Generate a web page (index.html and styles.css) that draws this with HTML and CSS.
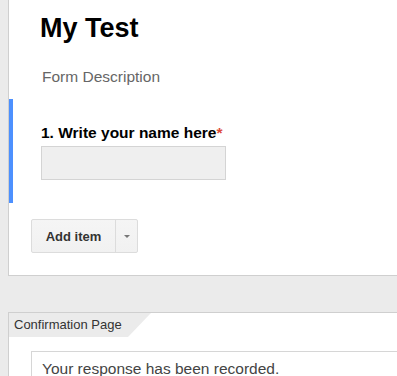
FILE: index.html
```html
<!DOCTYPE html>
<html lang="en">
<head>
  <meta charset="UTF-8">
  <title>My Test - Form Editor</title>
  <link rel="stylesheet" href="styles.css">
</head>
<body>
  <div class="form-card">
    <div class="form-header">
      <h1 class="form-title">My Test</h1>
      <div class="form-description">Form Description</div>
    </div>

    <div class="question active">
      <div class="question-title">1. Write your name here<span class="required">*</span></div>
      <input type="text" class="question-input">
    </div>

    <div class="add-row">
      <div class="split-button">
        <button class="split-main">Add item</button>
        <button class="split-arrow"><span class="caret"></span></button>
      </div>
    </div>
  </div>

  <div class="confirm-card">
    <div class="confirm-tab">Confirmation Page</div>
    <div class="confirm-message">Your response has been recorded.</div>
  </div>
</body>
</html>
```

FILE: styles.css
```css
body {
  margin: 0;
  padding-left: 8px;
  background-color: #ebebeb;
  font-family: "Liberation Sans", Arial, sans-serif;
  color: #222;
  overflow: hidden;
}
.form-card {
  background-color: #fff;
  border-left: 1px solid #cfcfcf;
  border-bottom: 1px solid #cfcfcf;
  height: 275px;
}
.form-header {
  padding: 13px 0 0 31px;
}
.form-title {
  margin: 0;
  font-size: 27px;
  line-height: 30px;
  font-weight: bold;
  color: #000;
}
.form-description {
  margin-top: 25px;
  padding-left: 2px;
  font-size: 15.5px;
  line-height: 18px;
  color: #666;
}
.question {
  margin-top: 13px;
  padding: 25px 0 23px 28px;
  border-left: 4px solid #4d90fe;
}
.question-title {
  font-size: 15.5px;
  line-height: 17px;
  font-weight: bold;
  color: #000;
}
.required {
  color: #dd4b39;
}
.question-input {
  display: block;
  margin-top: 5px;
  width: 185px;
  height: 34px;
  box-sizing: border-box;
  border: 1px solid #d4d4d4;
  background-color: #efefef;
}
.add-row {
  padding: 16px 0 0 22px;
}
.split-button {
  display: inline-flex;
  border: 1px solid #dcdcdc;
  border-radius: 2px;
  background: linear-gradient(#f5f5f5, #f1f1f1);
}
.split-button button {
  border: none;
  background: none;
  height: 32px;
  font-family: inherit;
  padding: 0;
}
.split-main {
  width: 84px;
  font-size: 13px;
  font-weight: bold;
  color: #333;
  border-right: 1px solid #dcdcdc !important;
}
.split-arrow {
  width: 21px;
  display: flex;
  align-items: center;
  justify-content: center;
}
.caret {
  width: 0;
  height: 0;
  border-left: 3.5px solid transparent;
  border-right: 3.5px solid transparent;
  border-top: 3.5px solid #777;
}
.confirm-card {
  margin-top: 36px;
  background-color: #fff;
  border-top: 1px solid #cfcfcf;
  border-left: 1px solid #cfcfcf;
  height: 63px;
  overflow: hidden;
}
.confirm-tab {
  width: 142px;
  height: 24px;
  box-sizing: border-box;
  padding: 4px 0 0 5px;
  background-color: #ebebeb;
  font-size: 13px;
  line-height: 16px;
  color: #333;
  clip-path: polygon(0 0, 100% 0, 119px 100%, 0 100%);
}
.confirm-message {
  margin: 14px 0 0 22px;
  padding: 8px 10px;
  border-top: 1px solid #d6d6d6;
  border-left: 1px solid #d6d6d6;
  font-size: 15.5px;
  line-height: 18px;
  color: #444;
}
```
